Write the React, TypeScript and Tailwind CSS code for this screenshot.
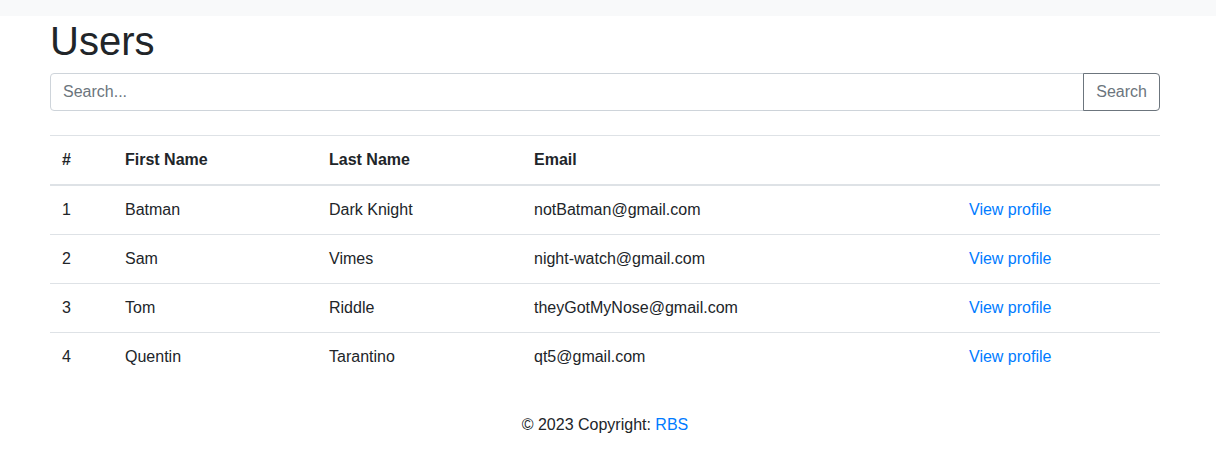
export default function App() {
  const users = [
    { id: 1, first: "Batman", last: "Dark Knight", email: "notBatman@gmail.com" },
    { id: 2, first: "Sam", last: "Vimes", email: "night-watch@gmail.com" },
    { id: 3, first: "Tom", last: "Riddle", email: "theyGotMyNose@gmail.com" },
    { id: 4, first: "Quentin", last: "Tarantino", email: "qt5@gmail.com" },
  ];

  return (
    <div className="min-h-[452px] bg-white text-[#212529] text-base leading-6 font-['Liberation_Sans',Arial,sans-serif]">
      <div className="h-4 bg-[#f8f9fa]" />

      <div className="pl-[50px] pr-[56px]">
        <h1 className="mt-px mb-2 text-[40px] leading-[48px] font-medium">Users</h1>

        {/* Search */}
        <div className="flex">
          <input
            type="text"
            placeholder="Search..."
            className="flex-1 h-[38px] px-3 border border-[#ced4da] rounded-l-[4px] text-base text-[#495057] placeholder:text-[#6c757d] outline-none"
          />
          <button className="h-[38px] px-3 border border-[#6c757d] rounded-r-[4px] text-[#6c757d] -ml-px">
            Search
          </button>
        </div>

        {/* Table */}
        <table className="w-full table-fixed mt-6 mb-4 border-collapse text-left">
          <thead>
            <tr className="border-t border-[#dee2e6] border-b-2">
              <th className="w-[63px] p-3 font-bold">#</th>
              <th className="w-[204px] p-3 font-bold">First Name</th>
              <th className="w-[205px] p-3 font-bold">Last Name</th>
              <th className="w-[435px] p-3 font-bold">Email</th>
              <th className="p-3" />
            </tr>
          </thead>
          <tbody>
            {users.map((u, i) => (
              <tr key={u.id} className={i > 0 ? "border-t border-[#dee2e6]" : ""}>
                <td className="p-3">{u.id}</td>
                <td className="p-3">{u.first}</td>
                <td className="p-3">{u.last}</td>
                <td className="p-3">{u.email}</td>
                <td className="p-3">
                  <a href="#" className="text-[#007bff]">View profile</a>
                </td>
              </tr>
            ))}
          </tbody>
        </table>

        <footer className="pt-4 pb-3 text-center">
          © 2023 Copyright: <a href="#" className="text-[#007bff]">RBS</a>
        </footer>
      </div>
    </div>
  );
}
